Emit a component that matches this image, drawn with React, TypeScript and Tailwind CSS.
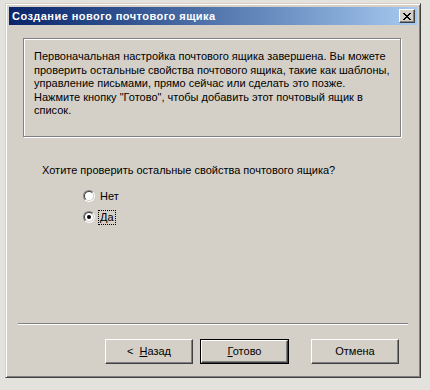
const font = { fontFamily: '"Liberation Sans", Arial, sans-serif' };

function Radio({ checked }: { checked?: boolean }) {
  return (
    <span className="inline-flex h-[12px] w-[12px] rounded-full border border-t-[#808080] border-l-[#808080] border-b-white border-r-white">
      <span className="flex h-full w-full items-center justify-center rounded-full border border-t-[#404040] border-l-[#404040] border-b-[#d4d0c8] border-r-[#d4d0c8] bg-white">
        {checked && <span className="h-[4px] w-[4px] rounded-full bg-black" />}
      </span>
    </span>
  );
}

function Button({ children, isDefault }: { children: React.ReactNode; isDefault?: boolean }) {
  const face = (
    <div className="flex h-full w-full items-center justify-center border border-t-white border-l-white border-b-[#404040] border-r-[#404040] bg-[#d4d0c8] text-[11px] text-black shadow-[inset_-1px_-1px_0_#808080]">
      {children}
    </div>
  );
  return isDefault ? (
    <div className="h-[25px] w-[89px] border border-black">{face}</div>
  ) : (
    <div className="h-[25px] w-[88px]">{face}</div>
  );
}

export default function App() {
  return (
    <div className="h-[390px] w-[430px] bg-[#e4e2dc] pl-[5px] pt-[3px]" style={font}>
      <div className="relative flex h-[375px] w-[416px] flex-col border border-t-[#d4d0c8] border-l-[#d4d0c8] border-b-[#404040] border-r-[#404040] bg-[#d4d0c8] p-[3px] shadow-[inset_1px_1px_0_white,inset_-1px_-1px_0_#808080]">
        {/* Title bar */}
        <div className="flex h-[18px] items-center justify-between bg-gradient-to-r from-[#0a246a] to-[#a6caf0] pl-[3px] pr-[2px]">
          <span className="text-[11px] font-bold tracking-[0.45px] text-white">Создание нового почтового ящика</span>
          <div className="flex h-[14px] w-[16px] items-center justify-center border border-t-white border-l-white border-b-[#404040] border-r-[#404040] bg-[#d4d0c8] shadow-[inset_-1px_-1px_0_#808080]">
            <svg width="8" height="7" viewBox="0 0 8 7" shapeRendering="crispEdges">
              <path d="M0 0h2v1H0zM6 0h2v1H6zM1 1h2v1H1zM5 1h2v1H5zM2 2h4v1H2zM3 3h2v1H3zM2 4h4v1H2zM1 5h2v1H1zM5 5h2v1H5zM0 6h2v1H0zM6 6h2v1H6z" fill="#000" />
            </svg>
          </div>
        </div>

        {/* Info panel */}
        <div className="ml-[14px] mt-[13px] h-[99px] w-[378px] whitespace-nowrap border border-[#808080] px-[10px] pt-[11px] text-[11px] leading-[13.5px] text-black shadow-[inset_1px_1px_0_white,1px_1px_0_white]">
          Первоначальная настройка почтового ящика завершена. Вы можете<br />
          проверить остальные свойства почтового ящика, такие как шаблоны,<br />
          управление письмами, прямо сейчас или сделать это позже.<br />
          Нажмите кнопку "Готово", чтобы добавить этот почтовый ящик в<br />
          список.
        </div>

        {/* Question */}
        <div className="ml-[33px] mt-[26px] text-[11px] leading-[14px] text-black">
          Хотите проверить остальные свойства почтового ящика?
        </div>
        <div className="ml-[74px] mt-[13px] flex flex-col gap-[9px] text-[11px] text-black">
          <div className="flex h-[12px] items-center gap-[5px]">
            <Radio />
            <span>Нет</span>
          </div>
          <div className="flex h-[12px] items-center gap-[3px]">
            <Radio checked />
            <span className="border border-dotted border-black px-[1px] leading-[13px]">Да</span>
          </div>
        </div>

        {/* Separator */}
        <div className="mt-auto ml-[9px] w-[390px] border-t border-[#808080] shadow-[0_1px_0_white]" />

        {/* Buttons */}
        <div className="mb-[10px] mt-[15px] flex items-center pl-[96px]">
          <Button>
            <span>&lt;&nbsp;&nbsp;<span className="underline">Н</span>азад</span>
          </Button>
          <div className="ml-[7px]">
            <Button isDefault>
              <span><span className="underline">Г</span>отово</span>
            </Button>
          </div>
          <div className="ml-[22px]">
            <Button>Отмена</Button>
          </div>
        </div>
      </div>
    </div>
  );
}
